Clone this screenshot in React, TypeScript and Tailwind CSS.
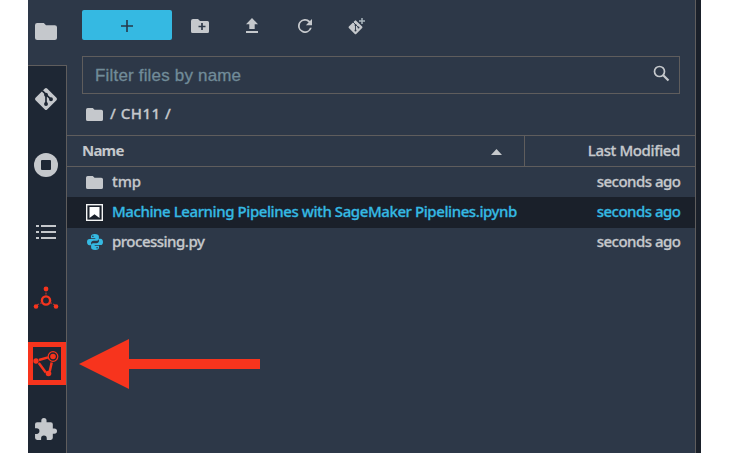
import React from "react";

const folderPath = "M10 4H4a2 2 0 0 0-2 2v12a2 2 0 0 0 2 2h16a2 2 0 0 0 2-2V8a2 2 0 0 0-2-2h-8l-2-2z";

function Folder({ className }: { className: string }) {
  return (
    <svg viewBox="2 4 20 16" preserveAspectRatio="none" className={className} fill="currentColor">
      <path d={folderPath} />
    </svg>
  );
}

function GitIcon({ className }: { className: string }) {
  return (
    <svg viewBox="0 0 24 24" className={className}>
      <rect x="3.8" y="3.8" width="16.4" height="16.4" rx="1.6" transform="rotate(45 12 12)" fill="currentColor" />
      <g stroke="#1e2734" strokeWidth="1.7" fill="#1e2734">
        <path d="M8.2 3.7 17 12.4M12 7.5v9.8" fill="none" />
        <circle cx="12" cy="7.8" r="1.1" />
        <circle cx="17" cy="12.3" r="1.1" />
        <circle cx="12" cy="17" r="1.1" />
      </g>
    </svg>
  );
}

function Sidebar() {
  return (
    <nav className="flex w-[39px] shrink-0 flex-col text-[#c5c8cc]">
      <div className="h-[65px] bg-[#2d3848] pt-[23px] pl-[7px]">
        <Folder className="h-[17px] w-[22px]" />
      </div>
      <div className="flex flex-1 flex-col border-t border-r border-[#5f5d5d] bg-[#1e2734]">
        <div className="h-[67px] pt-[21px] pl-[6px]"><GitIcon className="size-6" /></div>
        <div className="h-[67px] pt-5 pl-[6px]">
          <svg viewBox="0 0 24 24" className="size-6">
            <circle cx="12" cy="12" r="12" fill="currentColor" />
            <rect x="7" y="7" width="10" height="10" rx="1" fill="#1e2734" />
          </svg>
        </div>
        <div className="h-[76px] pt-6 pl-2">
          <svg viewBox="0 0 20 18" className="h-[18px] w-5" fill="currentColor">
            <path d="M0 1h3v2H0zM5 1h15v2H5zM0 7h3v2H0zM5 7h15v2H5zM0 13h3v2H0zM5 13h15v2H5z" />
          </svg>
        </div>
        <div className="h-[66px] pt-[10px] pl-[5px]">
          <svg viewBox="0 0 26 24" className="h-6 w-[26px]" fill="#f7341d" stroke="#f7341d">
            <circle cx="13" cy="14.5" r="4.1" fill="none" strokeWidth="2.4" />
            <path d="M13 3v6M9 16.5 4 19M17 16.5l5 2.5" strokeWidth="1.3" strokeDasharray="2 1.4" stroke="#a33a35" />
            <g stroke="none"><circle cx="13" cy="3" r="2.4" /><circle cx="3" cy="20.5" r="2.3" /><circle cx="23" cy="20.5" r="2.3" /></g>
          </svg>
        </div>
        <div className="h-[43px] w-[38px] border-[5px] border-[#f7341d]">
          <svg viewBox="1 0 28 33" className="h-[33px] w-[28px]" fill="#f7341d" stroke="#f7341d">
            <path d="m7 13 9-2.600M6.800 16l7 9.500M17.700 24.500l2-9" strokeWidth="2.500" fill="none" />
            <circle cx="21" cy="9.500" r="4.800" fill="none" strokeWidth="1.300" />
            <g stroke="none"><circle cx="21" cy="9.500" r="2.800" /><circle cx="4" cy="14" r="2.700" /><circle cx="16.500" cy="26.500" r="2.800" /></g>
          </svg>
        </div>
        <div className="pt-[33px] pl-[6px]">
          <svg viewBox="1 1 22 22" preserveAspectRatio="none" className="h-[23px] w-[23px]" fill="currentColor">
            <path d="M20.5 11H19V7a2 2 0 0 0-2-2h-4V3.5a2.5 2.5 0 0 0-5 0V5H4a2 2 0 0 0-2 2v3.800h1.500a2.700 2.700 0 0 1 0 5.400H2V20a2 2 0 0 0 2 2h3.800v-1.500a2.700 2.700 0 0 1 5.400 0V22H17a2 2 0 0 0 2-2v-4h1.500a2.500 2.500 0 0 0 0-5z" />
          </svg>
        </div>
      </div>
    </nav>
  );
}

function Toolbar() {
  return (
    <div className="flex h-[56px] items-start pt-[10px] pl-[15px]">
      <button className="flex h-[30px] w-[90px] items-center justify-center rounded-[2px] bg-[#35b9e2]">
        <svg viewBox="0 0 12 12" className="mt-px size-3" stroke="#26384a" strokeWidth="1.600"><path d="M6 0v12M0 6h12" /></svg>
      </button>
      <svg viewBox="0 0 18 14" className="mt-[9px] ml-[19px] h-[14px] w-[18px]">
        <path d="M2 0h5l2 2h7.500Q18 2 18 3.500v9q0 1.500-1.500 1.500h-15Q0 14 0 12.500V2Q0 0 2 0z" fill="#c5c8cc" />
        <path d="M11 4v7M7.500 7.500h7" stroke="#2d3848" strokeWidth="1.700" />
      </svg>
      <svg viewBox="0 0 14 16" className="mt-2 ml-[36px] h-4 w-[14px]" fill="#c5c8cc">
        <path d="m7 0 6 6.300H9.700V11H4.300V6.300H1zM1 13h12v2H1z" />
      </svg>
      <svg viewBox="4 4 16 16" className="mt-[9px] ml-[39px] size-[14px]" fill="#c5c8cc">
        <path d="M17.65 6.35A8 8 0 1 0 19.73 14h-2.080A6 6 0 1 1 12 6c1.660 0 3.140.69 4.220 1.780L13 11h7V4z" />
      </svg>
      <svg viewBox="0 0 18 18" className="mt-2 ml-[36px] size-[18px]">
        <rect x="2.300" y="4.100" width="10.400" height="10.400" rx="1" transform="rotate(45 7.500 9.300)" fill="#c5c8cc" />
        <path d="m5 4 5.500 5.500M7.500 6v7" stroke="#2d3848" strokeWidth=".9" />
        <g fill="#2d3848"><circle cx="7.500" cy="7" r="1" /><circle cx="7.500" cy="12.500" r="1" /><circle cx="10.500" cy="9.500" r="1" /></g>
        <path d="M14 0v6M11 3h6" stroke="#a9b5bd" strokeWidth="1.500" />
      </svg>
    </div>
  );
}

function Notebook() {
  return (
    <svg viewBox="0 0 17 17" className="size-[17px]">
      <rect width="17" height="17" fill="#f4f5f5" />
      <rect x="1.400" y="1.400" width="14.200" height="14.200" fill="#1a202a" />
      <path d="M3.500 3h10v11l-5-3.800-5 3.800z" fill="#fff" />
    </svg>
  );
}

function Python() {
  const half =
    "M7.800 0C5 0 4 1 4 2.500v1.800h4.300v.7H2.500C.8 5 0 6.200 0 8.100S.9 11.300 2.400 11.300H4V9.200c0-1.500 1.100-2.400 2.500-2.400h3.400c1.200 0 2-.9 2-2V2.500C11.900 1 10.600 0 7.800 0zM5.900 1.400a.8.8 0 1 1 0 1.600.8.8 0 0 1 0-1.600z";
  return (
    <svg viewBox="0 0 16 16" className="ml-px size-4" fill="#35b9e2">
      <path d={half} />
      <path transform="rotate(180 8 8)" d={half} />
    </svg>
  );
}

function FileRow({ icon, name, tracking, selected = false }: { icon: React.ReactNode; name: string; tracking: string; selected?: boolean }) {
  return (
    <div className={`flex items-center pr-[15px] pl-[19px] whitespace-nowrap ${selected ? "h-[31px] bg-[#1a202a] text-[#35b9e2]" : "h-[30px] text-[#c5c8cc]"}`}>
      <span className="flex w-[26px] shrink-0">{icon}</span>
      <span className={`pb-[2px] ${tracking}`}>{name}</span>
      <span className="-mr-[0.5px] ml-auto pb-[2px] tracking-[-0.5px]">seconds ago</span>
    </div>
  );
}

export default function App() {
  return (
    <div className="flex h-[453px] w-[729px] overflow-hidden bg-white pl-7 font-['Noto_Sans',sans-serif] text-[15px] font-medium">
      <Sidebar />
      <main className="flex w-[629px] shrink-0 flex-col border-r border-[#5f5d5d] bg-[#2d3848] text-[#c5c8cc] [-webkit-text-stroke:0.3px_currentColor]">
        <Toolbar />
        <div className="ml-[15px] flex h-[38px] w-[598px] items-center justify-between border border-[#5f5d5d] pr-[9px] pl-[12px]">
          <span className="pt-[2px] font-['Liberation_Sans',sans-serif] text-[17px] font-normal tracking-[0.18px] text-[#718c99]">Filter files by name</span>
          <svg viewBox="0 0 17 17" className="mb-[3px] size-[17px]" fill="none" stroke="#c5c8cc">
            <circle cx="6.500" cy="6.500" r="5" strokeWidth="1.700" />
            <path d="m10 10 5.500 5.500" strokeWidth="2.200" />
          </svg>
        </div>
        <div className="flex h-[41px] items-center pl-[19px]">
          <Folder className="h-[13px] w-[17px]" />
          <span className="ml-[7px] pb-[2px] tracking-[0.5px] whitespace-pre">/ CH11 /</span>
        </div>
        <div className="flex h-8 border-y border-[#5f5d5d]">
          <div className="flex w-[458px] items-center justify-between border-r border-[#5f5d5d] pr-[22px] pl-[15px]">
            <span className="pb-[2px] font-bold tracking-[-0.8px] [-webkit-text-stroke:0]">Name</span>
            <svg viewBox="0 0 11 6" className="mt-px h-[6px] w-[11px]"><path d="M5.500 0 11 6H0z" fill="#c5c8cc" /></svg>
          </div>
          <div className="flex flex-1 items-center justify-end pr-[15px] pb-[2px] tracking-[-0.38px]">Last Modified</div>
        </div>
        <FileRow icon={<Folder className="h-[13px] w-[17px]" />} name="tmp" tracking="tracking-[-0.1px]" />
        <FileRow icon={<Notebook />} name="Machine Learning Pipelines with SageMaker Pipelines.ipynb" tracking="tracking-[-0.42px]" selected />
        <div className="-mt-px">
          <FileRow icon={<Python />} name="processing.py" tracking="tracking-[-0.5px]" />
        </div>
        <svg viewBox="0 0 182 52" className="mt-[81px] ml-3 h-[52px] w-[182px]" fill="#f7341d">
          <path d="M0 26 50 1v20h131v10H50v20z" />
        </svg>
      </main>
      <div className="w-[5px] shrink-0 bg-[#1a202a]" />
    </div>
  );
}
